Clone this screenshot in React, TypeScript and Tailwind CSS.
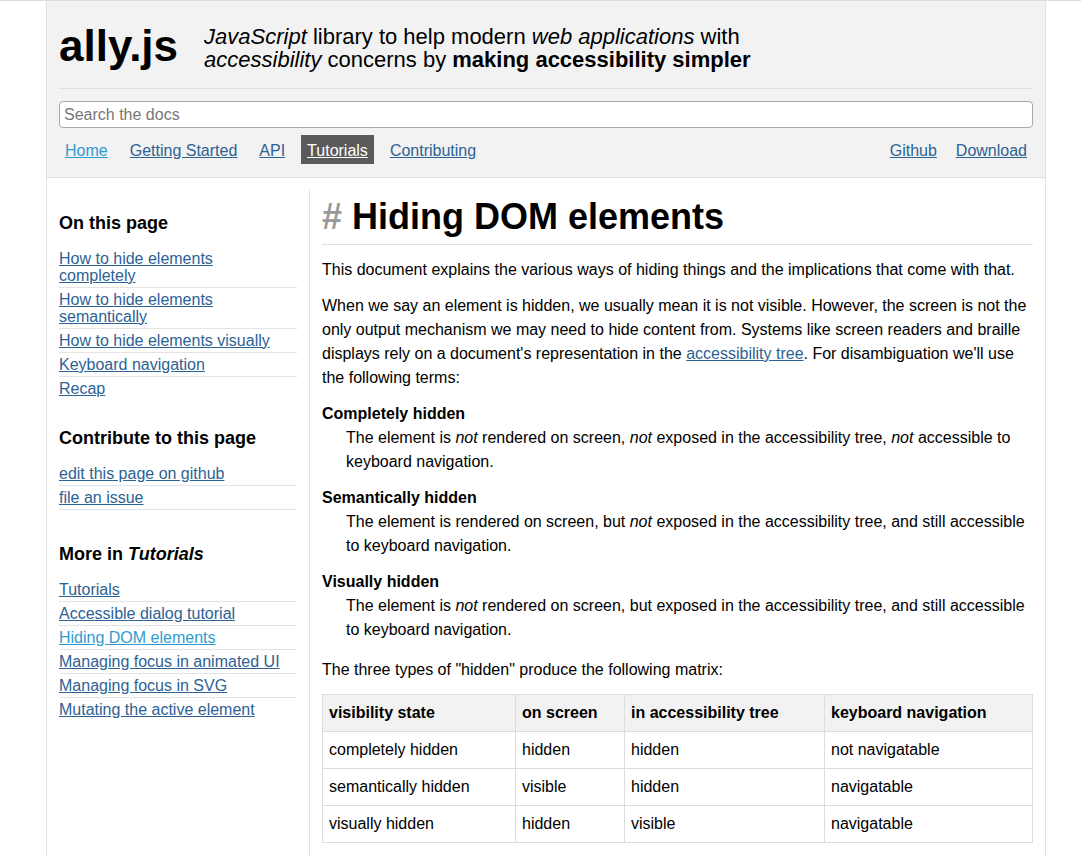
import React from "react";

const DARK = "text-[#2d6294]";
const LIGHT = "text-[#2f9bd0]";

function SideItem({
  children,
  light,
  border = true,
}: {
  children: React.ReactNode;
  light?: boolean;
  border?: boolean;
}) {
  return (
    <li className={`py-[3px] leading-[17px] ${border ? "border-b border-[#e3e3e3]" : ""}`}>
      <a href="#" className={`underline ${light ? LIGHT : DARK}`}>
        {children}
      </a>
    </li>
  );
}

function SideHeading({ children }: { children: React.ReactNode }) {
  return <h3 className="text-[18px] font-bold leading-[22px] mb-[12.5px] text-black">{children}</h3>;
}

export default function App() {
  const rows = [
    ["completely hidden", "hidden", "hidden", "not navigatable"],
    ["semantically hidden", "visible", "hidden", "navigatable"],
    ["visually hidden", "hidden", "visible", "navigatable"],
  ];
  return (
    <div
      className="min-h-[857px] bg-white border-t border-[#dcdcdc] text-black"
      style={{ fontFamily: '"Liberation Sans", Arial, Helvetica, sans-serif' }}
    >
      <div className="ml-[46px] w-[1000px] border-x border-[#e2e2e2] min-h-[856px]">
        {/* Header */}
        <header className="bg-[#f2f2f2] border-b border-[#e0e0e0] px-[12px] pt-[21px] pb-[13px]">
          <div className="flex items-start gap-[26px] pb-[17px] border-b border-[#e0e0e0]">
            <div className="text-[44px] font-bold leading-[48px]">ally.js</div>
            <div className="mt-[3px] text-[22px] leading-[23px]">
              <em>JavaScript</em> library to help modern <em>web applications</em> with
              <br />
              <em>accessibility</em> concerns by <strong>making accessibility simpler</strong>
            </div>
          </div>
          <input
            type="text"
            placeholder="Search the docs"
            className="mt-[12px] block w-full h-[27px] bg-white border border-[#a9a9a9] rounded-[4px] px-[4px] text-[16px] placeholder:text-[#777] outline-none"
          />
          <nav className="mt-[7px] flex items-center justify-between text-[16px] leading-[17px]">
            <div className="flex items-center gap-[10px]">
              <a href="#" className={`px-[6px] pt-[7px] pb-[5px] underline ${LIGHT}`}>Home</a>
              <a href="#" className={`px-[6px] pt-[7px] pb-[5px] underline ${DARK}`}>Getting Started</a>
              <a href="#" className={`px-[6px] pt-[7px] pb-[5px] underline ${DARK}`}>API</a>
              <a href="#" className="px-[6px] pt-[7px] pb-[5px] underline text-white bg-[#5a5a5a]">Tutorials</a>
              <a href="#" className={`px-[6px] pt-[7px] pb-[5px] underline ${DARK}`}>Contributing</a>
            </div>
            <div className="flex items-center gap-[7px]">
              <a href="#" className={`px-[6px] pt-[7px] pb-[5px] underline ${DARK}`}>Github</a>
              <a href="#" className={`px-[6px] pt-[7px] pb-[5px] underline ${DARK}`}>Download</a>
            </div>
          </nav>
        </header>

        {/* Body */}
        <div className="flex">
          <aside className="w-[262px] shrink-0 px-[12px] pt-[34px] text-[16px]">
            <SideHeading>On this page</SideHeading>
            <ul>
              <SideItem>How to hide elements<br />completely</SideItem>
              <SideItem>How to hide elements<br />semantically</SideItem>
              <SideItem>How to hide elements visually</SideItem>
              <SideItem>Keyboard navigation</SideItem>
              <SideItem border={false}>Recap</SideItem>
            </ul>
            <div className="mt-[27.5px]">
              <SideHeading>Contribute to this page</SideHeading>
              <ul>
                <SideItem>edit this page on github</SideItem>
                <SideItem>file an issue</SideItem>
              </ul>
            </div>
            <div className="mt-[33.5px]">
              <SideHeading>
                More in <em>Tutorials</em>
              </SideHeading>
              <ul>
                <SideItem>Tutorials</SideItem>
                <SideItem>Accessible dialog tutorial</SideItem>
                <SideItem light>Hiding DOM elements</SideItem>
                <SideItem>Managing focus in animated UI</SideItem>
                <SideItem>Managing focus in SVG</SideItem>
                <SideItem border={false}>Mutating the active element</SideItem>
              </ul>
            </div>
          </aside>

          <main className="flex-1 mt-[12px] border-l border-[#e2e2e2] px-[12px] pb-[20px] text-[16px] leading-[24px] min-h-[667px]">
            <h1 className="mt-[7px] pb-[7px] border-b border-[#dedede] text-[36px] font-bold leading-[40px]">
              <span className="text-[#999]">#</span> Hiding DOM elements
            </h1>
            <p className="mt-[13px]">
              This document explains the various ways of hiding things and the implications that come with that.
            </p>
            <p className="mt-[12px]">
              When we say an element is hidden, we usually mean it is not visible. However, the screen is not the only output
              mechanism we may need to hide content from. Systems like screen readers and braille displays rely on a
              document's representation in the{" "}
              <a href="#" className={`underline ${DARK}`}>accessibility tree</a>. For disambiguation we'll use the following
              terms:
            </p>
            <dl className="mt-[12px]">
              <dt className="font-bold">Completely hidden</dt>
              <dd className="ml-[24px]">
                The element is <em>not</em> rendered on screen, <em>not</em> exposed in the accessibility tree, <em>not</em>{" "}
                accessible to keyboard navigation.
              </dd>
              <dt className="font-bold mt-[12px]">Semantically hidden</dt>
              <dd className="ml-[24px]">
                The element is rendered on screen, but <em>not</em> exposed in the accessibility tree, and still accessible
                to keyboard navigation.
              </dd>
              <dt className="font-bold mt-[12px]">Visually hidden</dt>
              <dd className="ml-[24px]">
                The element is <em>not</em> rendered on screen, but exposed in the accessibility tree, and still accessible
                to keyboard navigation.
              </dd>
            </dl>
            <p className="mt-[16px]">The three types of "hidden" produce the following matrix:</p>
            <table className="mt-[12px] w-full border-collapse">
              <thead>
                <tr className="bg-[#f2f2f2]">
                  <th className="w-[193px] border border-[#dddddd] px-[6px] py-[6px] text-left font-bold">visibility state</th>
                  <th className="w-[109px] border border-[#dddddd] px-[6px] py-[6px] text-left font-bold">on screen</th>
                  <th className="w-[200px] border border-[#dddddd] px-[6px] py-[6px] text-left font-bold">in accessibility tree</th>
                  <th className="border border-[#dddddd] px-[6px] py-[6px] text-left font-bold">keyboard navigation</th>
                </tr>
              </thead>
              <tbody>
                {rows.map((r) => (
                  <tr key={r[0]}>
                    {r.map((c, i) => (
                      <td key={i} className="border border-[#dddddd] px-[6px] py-[6px]">
                        {c}
                      </td>
                    ))}
                  </tr>
                ))}
              </tbody>
            </table>
          </main>
        </div>
      </div>
    </div>
  );
}
